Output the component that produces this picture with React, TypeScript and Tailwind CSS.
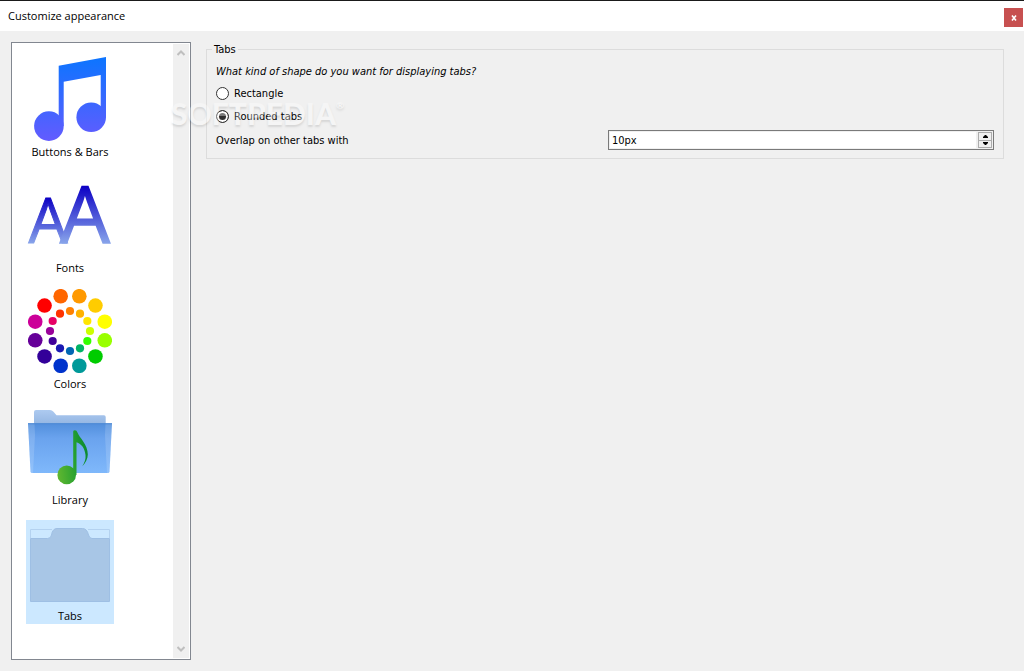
import { useState } from "react";
import type { ReactNode } from "react";

const outerDots = ["#ff9900", "#ffcc00", "#ffff00", "#99ff00", "#00cc00", "#009999", "#0033cc", "#330099", "#660099", "#cc0099", "#ff0000", "#ff6600"];
const innerDots = ["#ff8000", "#ffb300", "#ffe600", "#ccff00", "#33ff00", "#00b366", "#0066b3", "#1a1ab3", "#400099", "#990099", "#e60066", "#ff3300"];

function dot(color: string, angle: number, distance: number, r: number) {
  const rad = (angle * Math.PI) / 180;
  return <circle key={color} cx={42 + distance * Math.sin(rad)} cy={42 - distance * Math.cos(rad)} r={r} fill={color} />;
}

function NotesIcon() {
  return (
    <svg viewBox="0 0 84 84" className="size-[84px]" aria-hidden="true">
      <defs>
        <linearGradient id="notes" gradientUnits="userSpaceOnUse" x1="0" y1="0" x2="0" y2="84">
          <stop offset="0" stopColor="#0c75ff" />
          <stop offset="1" stopColor="#635bff" />
        </linearGradient>
      </defs>
      <g fill="url(#notes)">
        <path d="M30.7 8.7 78 0V60.3H72.7V18L35.7 24.7V69H30.7Z" />
        <circle cx="63.2" cy="60.3" r="14.8" />
        <circle cx="20.9" cy="69.1" r="14.8" />
      </g>
    </svg>
  );
}

function FontsIcon() {
  return (
    <svg viewBox="0 0 84 84" className="size-[84px] overflow-visible font-['Open_Sans',sans-serif]" aria-hidden="true">
      <defs>
        <linearGradient id="bigLetter" gradientUnits="userSpaceOnUse" x1="0" y1="13" x2="0" y2="70">
          <stop offset="0" stopColor="#0c00c4" />
          <stop offset="1" stopColor="#87a3ea" />
        </linearGradient>
        <linearGradient id="smallLetter" gradientUnits="userSpaceOnUse" x1="0" y1="25" x2="0" y2="70">
          <stop offset="0" stopColor="#0c00c4" />
          <stop offset="1" stopColor="#87a3ea" />
        </linearGradient>
      </defs>
      <text x="0.5" y="70" fontSize="62" fill="url(#smallLetter)" stroke="url(#smallLetter)">A</text>
      <text x="32" y="70" fontSize="79" fill="url(#bigLetter)" stroke="url(#bigLetter)" strokeWidth="1.5">A</text>
    </svg>
  );
}

function ColorsIcon() {
  return (
    <svg viewBox="0 0 84 84" className="size-[84px]" aria-hidden="true">
      {outerDots.map((color, i) => dot(color, 15 + i * 30, 36, 7.3))}
      {innerDots.map((color, i) => dot(color, i * 30, 20, 4.1))}
    </svg>
  );
}

function LibraryIcon() {
  return (
    <svg viewBox="0 0 84 84" className="size-[84px]" aria-hidden="true">
      <defs>
        <linearGradient id="folderBack" x1="0" y1="0" x2="0" y2="1">
          <stop offset="0" stopColor="#adcaf0" />
          <stop offset="1" stopColor="#8fb2e0" />
        </linearGradient>
        <linearGradient id="folderFront" x1="0" y1="0" x2="0" y2="1">
          <stop offset="0" stopColor="#528fdc" />
          <stop offset="0.3" stopColor="#6aa3ee" />
          <stop offset="1" stopColor="#7fb8fb" />
        </linearGradient>
        <linearGradient id="folderNote" gradientUnits="userSpaceOnUse" x1="29" y1="70" x2="62" y2="66">
          <stop offset="0" stopColor="#62b830" />
          <stop offset="0.6" stopColor="#25a030" />
          <stop offset="1" stopColor="#0a8a30" />
        </linearGradient>
      </defs>
      <path d="M6 22V7Q6 5 8 5H22Q24 5 25.5 6.8L28.5 10.3H76Q77.7 10.3 77.7 12V22Z" fill="url(#folderBack)" />
      <path d="M0 18.3H84L81.5 66.5Q81.3 68 80 68H4Q2.7 68 2.5 66.5Z" fill="url(#folderFront)" />
      <path d="M0 18.3H6.5L7 30 5 68H4Q2.7 68 2.5 66.5ZM84 18.3H77.5L77 30 79 68H80Q81.3 68 81.5 66.5Z" fill="#fff" fillOpacity="0.15" />
      <path d="M0 18.8H84" stroke="#4d89d5" fill="none" />
      <g fill="url(#folderNote)">
        <circle cx="38.7" cy="69.9" r="9.3" />
        <path d="M45.2 26.5Q45.2 25.3 47 25.3T49.2 27C51.5 33 59.8 39.5 59.8 49.5C59.8 54 57.5 58 54.3 61.2C56.5 57.5 58 54 57.5 50C56.5 43 53.5 39 48.5 37.3V70H45.2Z" />
      </g>
    </svg>
  );
}

function TabsIcon() {
  return (
    <svg viewBox="0 0 84 84" className="size-[84px]" aria-hidden="true">
      <path d="M2.5 17V8.5H24M60 8.5H81.5V17" fill="none" stroke="#b4d2f0" />
      <path
        d="M2.5 17.5H19.5Q23 17.5 23.5 14Q24.5 7.5 29 7.5H54.5Q59 7.5 60.5 14Q61.5 17.5 64 17.5H81.5V80.5H2.5Z"
        fill="#a8c6e6"
        stroke="#9ebfe4"
      />
    </svg>
  );
}

const sections: { label: string; icon: ReactNode }[] = [
  { label: "Buttons & Bars", icon: <NotesIcon /> },
  { label: "Fonts", icon: <FontsIcon /> },
  { label: "Colors", icon: <ColorsIcon /> },
  { label: "Library", icon: <LibraryIcon /> },
  { label: "Tabs", icon: <TabsIcon /> },
];

function Sidebar() {
  const [active, setActive] = useState("Tabs");

  return (
    <nav className="flex w-[180px] shrink-0 border border-[#828790] bg-white p-px">
      <ul className="flex flex-1 flex-col gap-3 px-[13px] pt-3">
        {sections.map((section) => (
          <li key={section.label}>
            <button
              type="button"
              onClick={() => setActive(section.label)}
              className={`flex h-[104px] w-[88px] flex-col items-center pt-px text-[11px] leading-4 ${active === section.label ? "bg-[#cce8ff]" : ""}`}
            >
              {section.icon}
              <span className="mt-[3px] whitespace-nowrap">{section.label}</span>
            </button>
          </li>
        ))}
      </ul>
      <div className="flex w-4 flex-col items-center justify-between bg-[#f0f0f0] py-1.5">
        <button type="button" aria-label="Scroll up">
          <svg viewBox="0 0 8 6" className="h-1.5 w-2" fill="none" stroke="#bfbfbf" strokeWidth="2">
            <path d="M0.5 5 4 1.5 7.5 5" />
          </svg>
        </button>
        <button type="button" aria-label="Scroll down">
          <svg viewBox="0 0 8 6" className="h-1.5 w-2" fill="none" stroke="#bfbfbf" strokeWidth="2">
            <path d="M0.5 1 4 4.5 7.5 1" />
          </svg>
        </button>
      </div>
    </nav>
  );
}

function TabsForm() {
  const [shape, setShape] = useState("Rounded tabs");
  const [overlap, setOverlap] = useState(10);

  return (
    <fieldset className="border border-[#dcdcdc] px-[9px] pb-2 font-['DejaVu_Sans_Condensed','DejaVu_Sans',sans-serif] text-[11px] leading-[14px]">
      <legend className="-ml-1 px-0.5 pt-px">Tabs</legend>
      <div className="flex flex-col gap-1.5 pt-[7px]">
        <p className="h-[15px] pt-px italic">What kind of shape do you want for displaying tabs?</p>
        <div className="flex flex-col items-start gap-[7px]">
          {["Rectangle", "Rounded tabs"].map((option) => (
            <label key={option} className="flex h-4 items-center gap-[5px]">
              <input
                type="radio"
                name="shape"
                value={option}
                checked={shape === option}
                onChange={() => setShape(option)}
                className="size-[13px] appearance-none rounded-full border border-[#333] bg-white checked:bg-[#333] checked:shadow-[inset_0_0_0_2px_white]"
              />
              <span className="pt-px">{option}</span>
            </label>
          ))}
        </div>
        <div className="grid grid-cols-2 items-center gap-1.5">
          <label htmlFor="overlap" className="pt-0.5">Overlap on other tabs with</label>
          <div className="flex h-5 border border-[#7a7a7a] bg-[#f0f0f0] p-px">
            <input
              id="overlap"
              type="text"
              value={`${overlap}px`}
              onChange={(e) => setOverlap(parseInt(e.target.value, 10) || 0)}
              className="min-w-0 flex-1 bg-white px-0.5 pt-0.5 outline-none"
            />
            <div className="ml-0.5 flex w-[14px] flex-col border border-[#acacac]">
              <button type="button" aria-label="Increase" onClick={() => setOverlap(overlap + 1)} className="grid flex-1 place-items-center border-b border-[#acacac]">
                <svg viewBox="0 0 5 3" className="h-[3px] w-[5px]">
                  <path d="M0 3V2L2 0H3L5 2V3Z" />
                </svg>
              </button>
              <button type="button" aria-label="Decrease" onClick={() => setOverlap(overlap - 1)} className="grid flex-1 place-items-center">
                <svg viewBox="0 0 5 3" className="h-[3px] w-[5px]">
                  <path d="M0 0H5V1L3 3H2L0 1Z" />
                </svg>
              </button>
            </div>
          </div>
        </div>
      </div>
    </fieldset>
  );
}

export default function App() {
  return (
    <div className="relative flex min-h-screen flex-col bg-[#f0f0f0] font-['Open_Sans','Noto_Sans',sans-serif] text-black">
      <header className="flex h-[31px] items-center justify-between border-t border-[#1a1a1a] bg-white pr-px pl-2">
        <h1 className="text-[11px] leading-4">Customize appearance</h1>
        <button type="button" aria-label="Close" className="mt-[3px] grid h-[19px] w-[19px] place-items-center bg-[#c75050]">
          <svg viewBox="0 0 6 6" className="size-1.5" fill="none" stroke="white">
            <path d="M1 0.5 5 5.5M5 0.5 1 5.5" strokeWidth="1.6" />
          </svg>
        </button>
      </header>
      <div className="flex flex-1 pt-[11px] pr-5 pb-[11px] pl-[11px]">
        <Sidebar />
        <main className="ml-[15px] flex-1">
          <TabsForm />
        </main>
      </div>
      <div className="pointer-events-none absolute top-[95px] left-[171px] flex font-['Lato',sans-serif] text-[30px] leading-9 font-black text-white opacity-35 [text-shadow:0_2px_2px_rgb(0_0_0/0.3)]">
        SOFTPEDIA
        <span className="text-[10px] leading-5">®</span>
      </div>
    </div>
  );
}
